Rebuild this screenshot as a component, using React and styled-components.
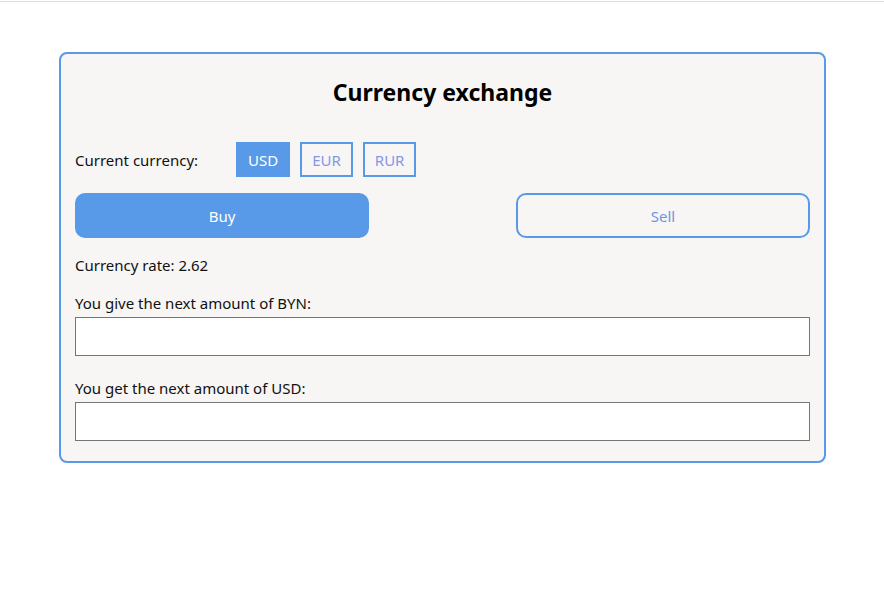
import React, { useState } from 'react'
import styled, { createGlobalStyle } from 'styled-components'

const GlobalStyle = createGlobalStyle`
  html, body {
    margin: 0;
    background: #ffffff;
    font-family: "Noto Sans", "Open Sans", sans-serif;
    color: #111;
  }
`

const TopLine = styled.div`
  margin-top: 1px;
  height: 1px;
  background: #dcdcdc;
`

const Card = styled.div`
  width: 767px;
  box-sizing: border-box;
  margin: 50px 0 0 59px;
  padding: 22px 14px 20px;
  border: 2px solid #5899e8;
  border-radius: 8px;
  background: #f7f6f5;
  display: flex;
  flex-direction: column;
`

const Title = styled.h2`
  margin: 0;
  text-align: center;
  font-size: 23px;
  line-height: 32px;
  font-weight: 700;
  color: #000;
`

const CurrencyRow = styled.div`
  margin-top: 34px;
  display: flex;
  align-items: center;
  gap: 10px;
`

const RowLabel = styled.span`
  width: 151px;
  font-size: 15px;
`

const CurrencyButton = styled.button`
  height: 35px;
  padding: 0 10px;
  box-sizing: border-box;
  border: 2px solid #5899e8;
  background: ${p => (p.$active ? '#5899e8' : 'transparent')};
  color: ${p => (p.$active ? '#ffffff' : '#8498e6')};
  font-family: inherit;
  font-size: 15px;
  cursor: pointer;
`

const ActionRow = styled.div`
  margin-top: 16px;
  display: flex;
  justify-content: space-between;
`

const ActionButton = styled.button`
  width: 40%;
  height: 45px;
  box-sizing: border-box;
  border-radius: 10px;
  border: 2px solid #5899e8;
  background: ${p => (p.$active ? '#5899e8' : 'transparent')};
  color: ${p => (p.$active ? '#ffffff' : '#6f94e3')};
  font-family: inherit;
  font-size: 15px;
  cursor: pointer;
`

const Text = styled.div`
  margin-top: ${p => p.$top}px;
  font-size: 15px;
  line-height: 22px;
`

const Input = styled.input`
  margin-top: 3px;
  height: 39px;
  box-sizing: border-box;
  border: 1px solid #767676;
  background: #fff;
  font-family: inherit;
  font-size: 15px;
  padding: 0 8px;
`

export default function App() {
  const [currency, setCurrency] = useState('USD')
  const [mode, setMode] = useState('buy')
  const currencies = ['USD', 'EUR', 'RUR']

  return (
    <>
      <GlobalStyle />
      <TopLine />
      <Card>
        <Title>Currency exchange</Title>
        <CurrencyRow>
          <RowLabel>Current currency:</RowLabel>
          {currencies.map(c => (
            <CurrencyButton key={c} $active={c === currency} onClick={() => setCurrency(c)}>
              {c}
            </CurrencyButton>
          ))}
        </CurrencyRow>
        <ActionRow>
          <ActionButton $active={mode === 'buy'} onClick={() => setMode('buy')}>Buy</ActionButton>
          <ActionButton $active={mode === 'sell'} onClick={() => setMode('sell')}>Sell</ActionButton>
        </ActionRow>
        <Text $top={16}>Currency rate: 2.62</Text>
        <Text $top={16}>You give the next amount of BYN:</Text>
        <Input type="text" />
        <Text $top={21}>You get the next amount of {currency}:</Text>
        <Input type="text" />
      </Card>
    </>
  )
}
